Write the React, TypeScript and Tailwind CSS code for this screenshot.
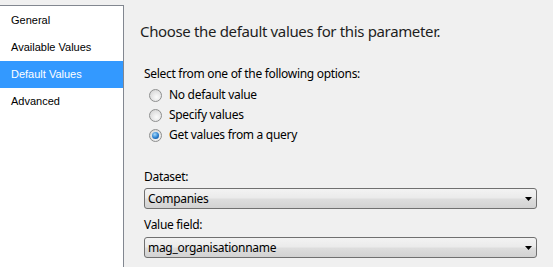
import React from "react";

const items = ["General", "Available Values", "Default Values", "Advanced"];

function Radio({ checked, label }: { checked?: boolean; label: string }) {
  return (
    <div className="flex h-[20px] items-center">
      <div className="ml-[5px] flex h-[13px] w-[13px] items-center justify-center rounded-full border border-[#8e8f8f] bg-[radial-gradient(circle_at_60%_65%,#fbfbfb,#dcdcdc_70%,#c8c8c8)]">
        {checked && (
          <div className="h-[7px] w-[7px] rounded-full bg-[radial-gradient(circle_at_40%_35%,#a6d9fb,#2a7fcf_55%,#0b3a78)]" />
        )}
      </div>
      <span className="ml-[7px] text-[12px] leading-[16px] tracking-[-0.3px] text-black">{label}</span>
    </div>
  );
}

function Combo({ value }: { value: string }) {
  return (
    <div className="flex h-[21px] w-[393px] items-center justify-between rounded-[3px] border border-[#707070] bg-[linear-gradient(#f3f3f3,#ebebeb_45%,#dddddd_55%,#d2d2d2)] pl-[3px] pr-[4px]">
      <span className="text-[12px] leading-[16px] tracking-[-0.3px] text-black">{value}</span>
      <svg width="7" height="4" viewBox="0 0 7 4">
        <path d="M0 0H7L3.5 4Z" fill="#000" />
      </svg>
    </div>
  );
}

export default function App() {
  return (
    <div className="flex h-[267px] w-[553px] overflow-hidden bg-[#f0f0f0]" style={{ fontFamily: '"Noto Sans", sans-serif' }}>
      <div
        className="mt-[5px] h-[262px] w-[124px] shrink-0 border-t border-r border-[#828790] bg-white pt-[1px]"
        style={{ fontFamily: '"Liberation Sans", Arial, sans-serif' }}
      >
        {items.map((it) => (
          <div
            key={it}
            className={
              "flex h-[27px] items-center pl-[11px] text-[11px] " +
              (it === "Default Values" ? "bg-[#3399ff] text-white" : "text-black")
            }
          >
            {it}
          </div>
        ))}
      </div>
      <div className="flex flex-col pl-[16px]">
        <div className="mt-[19px] text-[15px] leading-[24px] tracking-[-0.35px] text-[#1e1e1e]">
          Choose the default values for this parameter.
        </div>
        <div className="pl-[4px]">
          <div className="mt-[23px] text-[12px] leading-[16px] tracking-[-0.3px] text-black">
            Select from one of the following options:
          </div>
          <div className="mt-[3px] flex flex-col">
            <Radio label="No default value" />
            <Radio label="Specify values" />
            <Radio label="Get values from a query" checked />
          </div>
          <div className="mt-[24px] text-[12px] leading-[16px] tracking-[-0.3px] text-black">Dataset:</div>
          <div className="mt-[3px]">
            <Combo value="Companies" />
          </div>
          <div className="mt-[8px] text-[12px] leading-[16px] tracking-[-0.3px] text-black">Value field:</div>
          <div className="mt-[4px]">
            <Combo value="mag_organisationname" />
          </div>
        </div>
      </div>
    </div>
  );
}
